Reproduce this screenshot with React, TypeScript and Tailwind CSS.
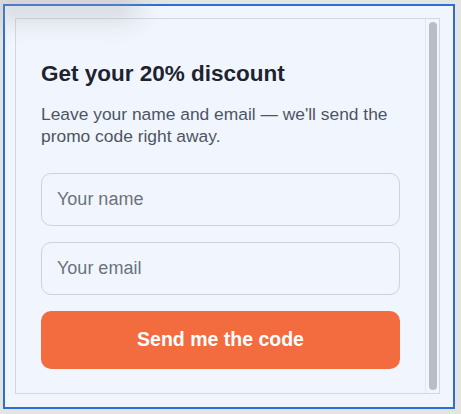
import { useState } from 'react';

const PromoForm = () => {
  const [name, setName] = useState('')
  const [email, setEmail] = useState('')

  const send = (e: React.FormEvent) => {
    e.preventDefault()
  }

  return (
    <form onSubmit={send} className="flex flex-col px-[25px] pt-[41px]">
      <h2 className="text-[22.5px] leading-[28px] font-bold text-[#1d2330]">Get your 20% discount</h2>
      <p className="mt-[16px] text-[17.4px] leading-[21.5px] text-[#4d5563]">
        Leave your name and email — we'll send the promo code right away.
      </p>
      <div className="mt-[26px] flex flex-col gap-[16px]">
        <input
          value={name}
          onChange={(e) => setName(e.target.value)}
          placeholder="Your name"
          className="h-[53px] w-full rounded-[10px] border border-[#cdd3dc] bg-[#f1f6fe] px-[15px] text-[18px] text-[#1d2330] placeholder:text-[#6b7280] outline-none"
        />
        <input
          value={email}
          onChange={(e) => setEmail(e.target.value)}
          placeholder="Your email"
          className="h-[53px] w-full rounded-[10px] border border-[#cdd3dc] bg-[#f1f6fe] px-[15px] text-[18px] text-[#1d2330] placeholder:text-[#6b7280] outline-none"
        />
        <button
          type="submit"
          className="h-[58px] w-full rounded-[10px] bg-[#f26c3f] text-[19.5px] font-bold text-white"
        >
          Send me the code
        </button>
      </div>
    </form>
  )
}

export default function App() {
  return (
    <div className="relative h-[414px] w-[461px] overflow-hidden bg-[#e4e4e4] pt-[4px] pl-[3px]" style={{ fontFamily: '"Liberation Sans", Arial, sans-serif' }}>
      <div className="relative h-[405px] w-[452px] border-2 border-[#2c6fd1] bg-[#f1f6fe] pt-[12px] pl-[10px]">
        <div className="flex h-[376px] w-[425px] border border-[#d3d8e0]">
          <div className="flex-1 overflow-hidden">
            <PromoForm />
          </div>
          {/* scrollbar */}
          <div className="flex w-[14px] justify-center border-l border-[#e1e5ec] py-[3px]">
            <div className="h-full w-[8px] rounded-full bg-[#b9bdc4]" />
          </div>
        </div>
      </div>
      {/* soft shadow left over from the window above */}
      <div className="pointer-events-none absolute left-[-10px] top-[-4px] h-[24px] w-[150px] rounded-full bg-[#a8a8a8]/40 blur-md" />
    </div>
  )
}
